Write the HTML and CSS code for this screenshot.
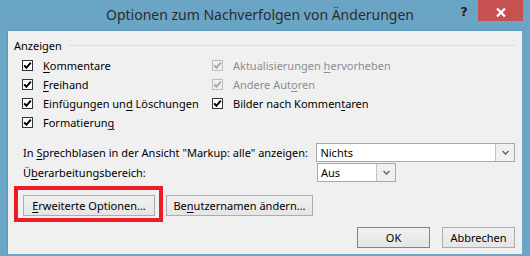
FILE: index.html
```html
<!DOCTYPE html>
<html lang="de">
<head>
    <meta charset="UTF-8">
    <title>Optionen zum Nachverfolgen von Änderungen</title>
    <link rel="stylesheet" href="styles.css">
</head>
<body>
    <div class="window">
        <div class="titlebar">
            <span class="title">Optionen zum Nachverfolgen von Änderungen</span>
            <span class="help">?</span>
            <span class="close">
                <svg width="10" height="9" viewBox="0 0 10 9">
                    <path d="M1 0.5L9 8.5M9 0.5L1 8.5" stroke="#fff" stroke-width="2.2"></path>
                </svg>
            </span>
        </div>

        <div class="client">
            <div class="group-header"><span>Anzeigen</span></div>

            <div class="checks">
                <div class="check">
                    <span class="box"><svg width="9" height="9" viewBox="0 0 9 9"><path d="M1.2 4.4L3.4 6.8L7.8 1.6" fill="none" stroke="currentColor" stroke-width="2"></path></svg></span>
                    <span><u>K</u>ommentare</span>
                </div>
                <div class="check disabled">
                    <span class="box"><svg width="9" height="9" viewBox="0 0 9 9"><path d="M1.2 4.4L3.4 6.8L7.8 1.6" fill="none" stroke="currentColor" stroke-width="2"></path></svg></span>
                    <span>Aktualisierungen <u>h</u>ervorheben</span>
                </div>
                <div class="check">
                    <span class="box"><svg width="9" height="9" viewBox="0 0 9 9"><path d="M1.2 4.4L3.4 6.8L7.8 1.6" fill="none" stroke="currentColor" stroke-width="2"></path></svg></span>
                    <span><u>F</u>reihand</span>
                </div>
                <div class="check disabled">
                    <span class="box"><svg width="9" height="9" viewBox="0 0 9 9"><path d="M1.2 4.4L3.4 6.8L7.8 1.6" fill="none" stroke="currentColor" stroke-width="2"></path></svg></span>
                    <span>Andere Aut<u>o</u>ren</span>
                </div>
                <div class="check">
                    <span class="box"><svg width="9" height="9" viewBox="0 0 9 9"><path d="M1.2 4.4L3.4 6.8L7.8 1.6" fill="none" stroke="currentColor" stroke-width="2"></path></svg></span>
                    <span>Einfügungen un<u>d</u> Löschungen</span>
                </div>
                <div class="check">
                    <span class="box"><svg width="9" height="9" viewBox="0 0 9 9"><path d="M1.2 4.4L3.4 6.8L7.8 1.6" fill="none" stroke="currentColor" stroke-width="2"></path></svg></span>
                    <span>Bilder nach Kommen<u>t</u>aren</span>
                </div>
                <div class="check">
                    <span class="box"><svg width="9" height="9" viewBox="0 0 9 9"><path d="M1.2 4.4L3.4 6.8L7.8 1.6" fill="none" stroke="currentColor" stroke-width="2"></path></svg></span>
                    <span>Formatierun<u>g</u></span>
                </div>
            </div>

            <div class="field-row first">
                <span class="field-label">In <u>S</u>prechblasen in der Ansicht "Markup: alle" anzeigen:</span>
                <div class="combo wide">
                    <span class="combo-value">Nichts</span>
                    <span class="combo-button"><svg width="7" height="5" viewBox="0 0 7 5"><path d="M0.5 1L3.5 4L6.5 1" fill="none" stroke="#606060" stroke-width="1.3"></path></svg></span>
                </div>
            </div>
            <div class="field-row">
                <span class="field-label">Ü<u>b</u>erarbeitungsbereich:</span>
                <div class="combo narrow">
                    <span class="combo-value">Aus</span>
                    <span class="combo-button"><svg width="7" height="5" viewBox="0 0 7 5"><path d="M0.5 1L3.5 4L6.5 1" fill="none" stroke="#606060" stroke-width="1.3"></path></svg></span>
                </div>
            </div>

            <div class="actions">
                <div class="highlight">
                    <button class="btn advanced"><u>E</u>rweiterte Optionen...</button>
                </div>
                <button class="btn username">Be<u>n</u>utzernamen ändern...</button>
            </div>

            <div class="footer">
                <button class="btn default">OK</button>
                <button class="btn">Abbrechen</button>
            </div>
        </div>
    </div>
</body>
</html>
```

FILE: styles.css
```css
* {
    margin: 0;
    padding: 0;
    box-sizing: border-box;
}

body {
    width: 530px;
    height: 256px;
    overflow: hidden;
    background-color: #6ba5c6;
    font-family: "Noto Sans", "Open Sans", sans-serif;
    font-size: 11px;
    color: #000;
    white-space: nowrap;
}

u {
    text-decoration: underline;
    text-underline-offset: 2px;
}

.window {
    width: 530px;
    height: 256px;
}

.titlebar {
    height: 30px;
    display: flex;
    align-items: flex-start;
}

.title {
    flex: 1;
    padding-left: 66px;
    line-height: 30px;
    text-align: center;
    font-size: 14px;
    color: #2b2b2b;
}

.help {
    width: 20px;
    margin-right: 4px;
    line-height: 24px;
    text-align: center;
    font-family: "DejaVu Sans", sans-serif;
    font-weight: bold;
    font-size: 13px;
    color: #222;
}

.close {
    width: 45px;
    height: 21px;
    margin-right: 7px;
    background-color: #c75050;
    display: flex;
    align-items: center;
    justify-content: center;
    padding-top: 3px;
}

.client {
    margin-left: 7px;
    width: 515px;
    height: 224px;
    background-color: #f0f0f0;
    padding-right: 7px;
    border-top: 1px solid #5f97b8;
    border-left: 1px solid #5f97b8;
}

.group-header {
    margin-top: 7px;
    height: 14px;
    padding-left: 6px;
    display: flex;
    align-items: center;
}

.group-header::after {
    content: "";
    flex: 1;
    height: 1px;
    margin-left: 7px;
    background-color: #dcdcdc;
}

.checks {
    margin-top: 4px;
    padding-left: 14px;
    display: grid;
    grid-template-columns: 190px auto;
    grid-auto-rows: 19px;
}

.check {
    display: flex;
    align-items: center;
    gap: 10px;
}

.box {
    flex: none;
    width: 11px;
    height: 11px;
    border: 1px solid #333;
    background-color: #fff;
    color: #000;
    display: flex;
    align-items: center;
    justify-content: center;
}

.check.disabled {
    color: #8d8d8d;
}

.check.disabled .box {
    border-color: #bcbcbc;
    background-color: #f0f0f0;
    color: #a8a8a8;
}

.field-row {
    height: 19px;
    margin-top: 1px;
    padding-left: 15px;
    display: flex;
    align-items: center;
}

.field-row.first {
    margin-top: 11px;
}

.field-label {
    width: 294px;
}

.combo {
    height: 19px;
    border: 1px solid #a9a9a9;
    background-color: #fff;
    display: flex;
}

.combo.wide {
    width: 199px;
}

.combo.narrow {
    width: 79px;
}

.combo-value {
    flex: 1;
    padding-left: 3px;
    line-height: 17px;
}

.combo-button {
    width: 19px;
    border-left: 1px solid #c4c4c4;
    background-color: #f0f0f0;
    display: flex;
    align-items: center;
    justify-content: center;
}

.actions {
    margin-top: 4px;
    padding-left: 6px;
    display: flex;
    align-items: flex-start;
}

.highlight {
    border: 4px solid #ed1c24;
    padding: 5px 4px 2px 5px;
}

.btn {
    height: 21px;
    border: 1px solid #acacac;
    background: linear-gradient(to bottom, #f0f0f0, #e5e5e5);
    font-family: inherit;
    font-size: 11px;
    color: #000;
}

.advanced {
    width: 132px;
}

.username {
    width: 147px;
    margin-left: 3px;
    margin-top: 9px;
}

.footer {
    margin-top: 5px;
    display: flex;
    justify-content: flex-end;
    gap: 12px;
}

.footer .btn {
    width: 73px;
}

.btn.default {
    border-color: #3c98dc;
}
```
